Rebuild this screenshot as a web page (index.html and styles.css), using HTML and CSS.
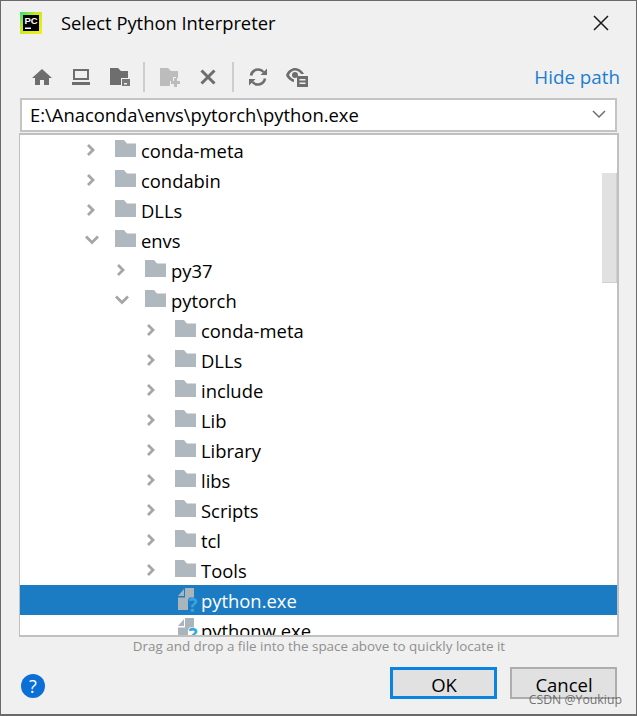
FILE: index.html
```html
<!DOCTYPE html>
<html lang="en">
<head>
    <meta charset="UTF-8">
    <meta name="viewport" content="width=device-width, initial-scale=1.0">
    <title>Select Python Interpreter</title>
    <link rel="stylesheet" href="styles.css">
</head>
<body>
<svg class="defs" width="0" height="0">
    <symbol id="folder" viewBox="0 0 21 17">
        <path d="M0 0h9l3 3.500h9V17H0z"/>
    </symbol>
    <symbol id="closed" viewBox="0 0 12 12">
        <path d="M3 1l5 5-5 5" fill="none" stroke="currentColor" stroke-width="2.800"/>
    </symbol>
    <symbol id="open" viewBox="0 0 14 10">
        <path d="M1 1.500l6 6 6-6" fill="none" stroke="currentColor" stroke-width="2.800"/>
    </symbol>
    <symbol id="file" viewBox="0 0 24 26">
        <path class="file-corner" d="M1 9l6-7v7z"/>
        <path class="file-body" d="M8 1h9v9.500h-4.500l-1.500 2V23H1V10.500h7z"/>
        <text class="file-mark" x="11.500" y="24.500">?</text>
    </symbol>
</svg>

<div class="dialog">
    <div class="title-bar">
        <svg class="app-logo" width="22" height="22" viewBox="0 0 22 22">
            <defs>
                <linearGradient id="logo-edge" x1="0" y1="0" x2="1" y2="1">
                    <stop offset="0" stop-color="#2fe07a"/>
                    <stop offset="0.400" stop-color="#c8e820"/>
                    <stop offset="1" stop-color="#f4ee20"/>
                </linearGradient>
            </defs>
            <rect width="22" height="22" fill="url(#logo-edge)"/>
            <rect x="3" y="3" width="16" height="16" fill="#000"/>
            <text x="4.500" y="11.500" class="logo-text">PC</text>
            <rect x="5" y="15.500" width="6" height="1.500" fill="#fff"/>
        </svg>
        <span class="title">Select Python Interpreter</span>
        <svg class="close-icon" width="16" height="16" viewBox="0 0 16 16">
            <path d="M1 1l14 14M15 1L1 15" stroke="#1a1a1a" stroke-width="1.500" fill="none"/>
        </svg>
    </div>

    <div class="toolbar">
        <span class="tool">
            <svg width="22" height="20" viewBox="0 0 22 20"><path d="M11 2L1 11h3v7h5v-5h4v5h5v-7h3z" fill="#6e6e6e"/></svg>
        </span>
        <span class="tool">
            <svg width="20" height="20" viewBox="0 0 20 20"><path d="M2 2h16v11H2zM4 4v7h12V4zM1 15h18v3H1z" fill="#6e6e6e" fill-rule="evenodd"/></svg>
        </span>
        <span class="tool">
            <svg width="22" height="20" viewBox="0 0 22 20"><path d="M1 1h8l3 3h7v7h-7v7H1z" fill="#6e6e6e"/><path d="M13 12h8v7h-8zM15 16v1.500h3V16z" fill="#7a7a7a" fill-rule="evenodd"/></svg>
        </span>
        <span class="tool-sep"></span>
        <span class="tool">
            <svg width="22" height="20" viewBox="0 0 22 20"><path d="M1 1h8l3 3h7v7h-2v-1h-3v4h-3v5H1z" fill="#bcbcbc"/><path d="M15 11h3v3h3v3h-3v3h-3v-3h-3v-3h3z" fill="#bcbcbc"/></svg>
        </span>
        <span class="tool tool-close">
            <svg width="18" height="18" viewBox="0 0 18 18"><path d="M2.500 2.500l13 13M15.500 2.500l-13 13" stroke="#6e6e6e" stroke-width="3" fill="none"/></svg>
        </span>
        <span class="tool-sep"></span>
        <span class="tool">
            <svg width="20" height="20" viewBox="0 0 20 20"><path d="M3 8.500A7.200 7.200 0 0 1 15.500 5M17 11.500A7.200 7.200 0 0 1 4.500 15" stroke="#6e6e6e" stroke-width="2.600" fill="none"/><path d="M12.500 8H19V1.500zM7.500 12H1v6.500z" fill="#6e6e6e"/></svg>
        </span>
        <span class="tool">
            <svg width="24" height="22" viewBox="0 0 24 22"><path d="M1 9c2-5 6-7 9-7s7 2 9 6h-3c-1.500-2-3.500-3.500-6-3.500S5.500 6 4 9c1 2 3 4 5 4.500V16C6 15.500 2.500 13 1 9z" fill="#6e6e6e"/><circle cx="10" cy="9" r="3" fill="#6e6e6e"/><path d="M12 10h11v11H12zM14.500 13v1.500h6V13zM14.500 16.500V18h6v-1.500z" fill="#6e6e6e" fill-rule="evenodd"/></svg>
        </span>
        <span class="hide-path">Hide path</span>
    </div>

    <div class="path-field">
        <span class="path-value">E:\Anaconda\envs\pytorch\python.exe</span>
        <svg class="path-arrow" width="14" height="9" viewBox="0 0 14 9"><path d="M1 1l6 6 6-6" stroke="#6e6e6e" stroke-width="1.500" fill="none"/></svg>
    </div>

    <div class="tree">
        <div class="row depth-0"><svg class="arrow"><use href="#closed"/></svg><svg class="folder"><use href="#folder"/></svg><span>conda-meta</span></div>
        <div class="row depth-0"><svg class="arrow"><use href="#closed"/></svg><svg class="folder"><use href="#folder"/></svg><span>condabin</span></div>
        <div class="row depth-0"><svg class="arrow"><use href="#closed"/></svg><svg class="folder"><use href="#folder"/></svg><span>DLLs</span></div>
        <div class="row depth-0"><svg class="arrow wide"><use href="#open"/></svg><svg class="folder"><use href="#folder"/></svg><span>envs</span></div>
        <div class="row depth-1"><svg class="arrow"><use href="#closed"/></svg><svg class="folder"><use href="#folder"/></svg><span>py37</span></div>
        <div class="row depth-1"><svg class="arrow wide"><use href="#open"/></svg><svg class="folder"><use href="#folder"/></svg><span>pytorch</span></div>
        <div class="row depth-2"><svg class="arrow"><use href="#closed"/></svg><svg class="folder"><use href="#folder"/></svg><span>conda-meta</span></div>
        <div class="row depth-2"><svg class="arrow"><use href="#closed"/></svg><svg class="folder"><use href="#folder"/></svg><span>DLLs</span></div>
        <div class="row depth-2"><svg class="arrow"><use href="#closed"/></svg><svg class="folder"><use href="#folder"/></svg><span>include</span></div>
        <div class="row depth-2"><svg class="arrow"><use href="#closed"/></svg><svg class="folder"><use href="#folder"/></svg><span>Lib</span></div>
        <div class="row depth-2"><svg class="arrow"><use href="#closed"/></svg><svg class="folder"><use href="#folder"/></svg><span>Library</span></div>
        <div class="row depth-2"><svg class="arrow"><use href="#closed"/></svg><svg class="folder"><use href="#folder"/></svg><span>libs</span></div>
        <div class="row depth-2"><svg class="arrow"><use href="#closed"/></svg><svg class="folder"><use href="#folder"/></svg><span>Scripts</span></div>
        <div class="row depth-2"><svg class="arrow"><use href="#closed"/></svg><svg class="folder"><use href="#folder"/></svg><span>tcl</span></div>
        <div class="row depth-2"><svg class="arrow"><use href="#closed"/></svg><svg class="folder"><use href="#folder"/></svg><span>Tools</span></div>
        <div class="row file-row selected"><svg class="file"><use href="#file"/></svg><span>python.exe</span></div>
        <div class="row file-row"><svg class="file"><use href="#file"/></svg><span>pythonw.exe</span></div>
        <div class="scroll-thumb"></div>
    </div>

    <div class="hint">Drag and drop a file into the space above to quickly locate it</div>

    <div class="footer">
        <span class="help">?</span>
        <button class="btn btn-ok">OK</button>
        <button class="btn btn-cancel">Cancel</button>
    </div>
    <div class="watermark">CSDN @Youkiup</div>
</div>
</body>
</html>
```

FILE: styles.css
```css
* {
    box-sizing: border-box;
}

html, body {
    margin: 0;
    height: 100%;
}

body {
    font-family: "Open Sans", "Noto Sans", sans-serif;
    background-color: #f0f0f0;
    color: #000;
    overflow: hidden;
}

.defs {
    position: absolute;
}

.dialog {
    position: relative;
    height: 716px;
    padding: 0 18px 0 18px;
    background-color: #f0f0f0;
    border: 1px solid #6a6a6a;
    border-width: 1px 1px 2px 1px;
    display: flex;
    flex-direction: column;
}

.title-bar {
    height: 46px;
    display: flex;
    align-items: center;
    padding: 0 0 2px 1px;
}

.app-logo {
    flex: none;
}

.logo-text {
    font-family: "Liberation Sans", sans-serif;
    font-size: 9.500px;
    font-weight: bold;
    fill: #fff;
}

.title {
    margin-left: 19px;
    margin-bottom: 2px;
    font-size: 18.350px;
    flex: 1;
}

.close-icon {
    margin-right: 9px;
}

.toolbar {
    height: 38px;
    margin-top: 11px;
    display: flex;
    align-items: center;
    padding-left: 3px;
}

.tool {
    width: 39px;
    height: 30px;
    display: flex;
    align-items: center;
    justify-content: center;
}

.tool-close {
    margin-left: -1px;
    margin-right: 1px;
}

.tool-sep {
    width: 2px;
    height: 30px;
    margin: 0 5px 0 4px;
    background-color: #cdcdcd;
}

.tool-close + .tool-sep {
    margin-right: 4px;
}

.hide-path {
    margin-left: auto;
    margin-right: -2px;
    font-size: 18.800px;
    color: #1b7ed0;
}

.path-field {
    height: 34px;
    margin: 2px 1px 0 1px;
    padding: 0 9px 2px 8px;
    background-color: #fff;
    border: 2px solid #c4c4c4;
    display: flex;
    align-items: center;
    justify-content: space-between;
    font-size: 18.400px;
}

.tree {
    position: relative;
    height: 504px;
    margin-top: 1px;
    margin-right: -1px;
    background-color: #fff;
    border: 2px solid #c0c0c0;
    border-left-width: 1px;
    overflow: hidden;
    font-size: 18.400px;
}

.row {
    height: 30px;
    display: flex;
    align-items: center;
    white-space: nowrap;
}

.depth-0 {
    padding-left: 65px;
}

.depth-1 {
    padding-left: 95px;
}

.depth-2 {
    padding-left: 125px;
}

.arrow {
    width: 12px;
    height: 12px;
    margin-right: 18px;
    color: #a6a6a6;
}

.arrow.wide {
    width: 14px;
    height: 10px;
    margin-right: 16px;
}

.folder {
    width: 21px;
    height: 17px;
    margin-top: -3px;
    margin-right: 5px;
    fill: #afb8bf;
}

.file-row {
    padding-left: 157px;
}

.file {
    width: 24px;
    height: 26px;
}

.file-corner,
.file-body {
    fill: #a9b4bb;
}

.file-mark {
    font-family: "Open Sans", sans-serif;
    font-size: 19px;
    font-weight: bold;
    fill: #38a5dd;
}

.selected {
    background-color: #1b7cc4;
    color: #fff;
}

.selected .file-corner,
.selected .file-body {
    fill: #7fa6c6;
}

.selected .file-mark {
    fill: #45b4f0;
}

.scroll-thumb {
    position: absolute;
    top: 38px;
    right: 0;
    width: 15px;
    height: 110px;
    background-color: #e1e1e1;
    border: solid #d0d0d0;
    border-width: 0 1px 1px 0;
}

.hint {
    text-align: center;
    font-size: 13.400px;
    color: #8f8f8f;
    padding-left: 1px;
}

.footer {
    margin-top: 12px;
    display: flex;
    align-items: center;
    gap: 13px;
    padding-right: 1px;
}

.help {
    width: 24px;
    height: 24px;
    margin: 6px auto 0 2px;
    border-radius: 50%;
    background-color: #0b6fd6;
    color: #fff;
    font-size: 18px;
    line-height: 24px;
    text-align: center;
}

.btn {
    width: 107px;
    height: 32px;
    padding: 2px 0 0 1px;
    font-family: inherit;
    font-size: 18.500px;
    background-color: #e1e1e1;
    color: #000;
    border: 2px solid #adadad;
}

.btn-ok {
    border: 3px solid #0a84e0;
}

.watermark {
    position: absolute;
    right: 14px;
    bottom: 6px;
    font-size: 12.300px;
    color: rgba(70, 70, 70, 0.75);
}
```
